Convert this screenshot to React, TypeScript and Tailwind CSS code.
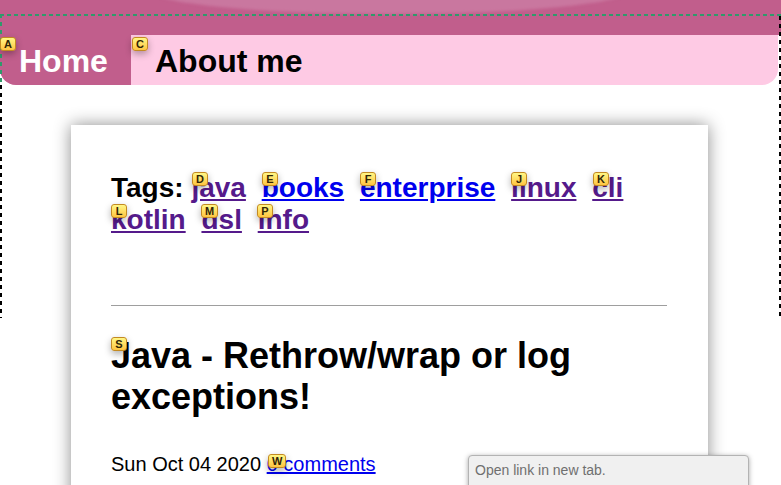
import React from "react";

const tags: { name: string; visited: boolean }[] = [
  { name: "java", visited: true },
  { name: "books", visited: false },
  { name: "enterprise", visited: false },
  { name: "linux", visited: true },
  { name: "cli", visited: true },
  { name: "kotlin", visited: true },
  { name: "dsl", visited: true },
  { name: "info", visited: true },
];

const hints: { l: string; x: number; y: number }[] = [
  { l: "A", x: 0, y: 37 },
  { l: "C", x: 132, y: 37 },
  { l: "D", x: 192, y: 172 },
  { l: "E", x: 262, y: 172 },
  { l: "F", x: 360, y: 172 },
  { l: "J", x: 511, y: 172 },
  { l: "K", x: 593, y: 172 },
  { l: "L", x: 111, y: 204 },
  { l: "M", x: 201, y: 204 },
  { l: "P", x: 257, y: 204 },
  { l: "S", x: 111, y: 337 },
  { l: "W", x: 268, y: 454 },
];

function Hint({ l, x, y }: { l: string; x: number; y: number }) {
  return (
    <div
      className="absolute z-30 min-w-[16px] px-[3px] border border-[#c38a22] rounded-[3px] bg-[image:linear-gradient(to_bottom,#fff785,#ffc542)] shadow-[0_3px_7px_rgba(0,0,0,0.3)] text-center text-[11px] leading-[12px] font-bold text-[#302505]"
      style={{ left: x, top: y }}
    >
      {l}
    </div>
  );
}

export default function App() {
  return (
    <div className="relative h-[485px] overflow-hidden bg-white font-['Liberation_Sans',Arial,sans-serif] text-black">
      <header>
        <div className="relative h-[35px] overflow-hidden bg-[#c15e8c]">
          <div className="absolute left-[150px] top-[-34px] h-[48px] w-[480px] rounded-[50%] bg-[#c9779f] blur-[1.5px]" />
        </div>
        <nav className="flex h-[50px] mr-[3px] overflow-hidden rounded-b-[16px] bg-[#fecae4]">
          <a className="flex w-[131px] items-center bg-[#c15e8c] pl-[19px] pt-[2px] text-[32px] font-bold text-white">
            Home
          </a>
          <a className="flex items-center pl-[24px] pt-[2px] text-[32px] font-bold text-black">
            About me
          </a>
        </nav>
      </header>

      <main className="pt-[40px]">
        <article className="ml-[71px] w-[637px] min-h-[500px] bg-white pl-[40px] pr-[41px] pt-[47px] shadow-[0_0_16px_rgba(0,0,0,0.45)]">
          <div className="text-[28px] leading-[32px] font-bold">
            Tags:{" "}
            {tags.map((t) => (
              <React.Fragment key={t.name}>
                <a
                  className={
                    "mr-2 underline " +
                    (t.visited ? "text-[#551a8b]" : "text-[#0000ee]")
                  }
                >
                  {t.name}
                </a>{" "}
              </React.Fragment>
            ))}
          </div>
          <hr className="mt-[69px] border-t border-[#9e9e9e]" />
          <h1 className="mt-[29px] text-[36px] leading-[41px] font-bold">
            Java - Rethrow/wrap or log exceptions!
          </h1>
          <p className="mt-[36px] text-[20px] leading-[23px]">
            Sun Oct 04 2020 <a className="text-[#0000ee] underline">0 comments</a>
          </p>
        </article>
      </main>

      {/* debug outlines */}
      <div className="absolute left-0 top-[14px] z-20 h-[2px] w-full bg-[image:repeating-linear-gradient(to_right,#2f9a6b_0_4px,transparent_4px_7px)]" />
      <div className="absolute left-0 top-[14px] z-20 h-[71px] w-[2px] bg-[image:repeating-linear-gradient(to_bottom,#2f9a6b_0_4px,transparent_4px_8px)]" />
      <div className="absolute left-0 top-[85px] z-20 h-[233px] w-[2px] bg-[image:repeating-linear-gradient(to_bottom,#000_0_4px,transparent_4px_8px)]" />
      <div className="absolute left-[779px] top-[16px] z-20 h-[302px] w-[2px] bg-[image:repeating-linear-gradient(to_bottom,#000_0_4px,transparent_4px_8px)]" />

      {hints.map((h) => (
        <Hint key={h.l} {...h} />
      ))}

      <div className="absolute left-[468px] top-[455px] z-40 h-[40px] w-[281px] rounded-[4px] border border-[#b3b3b3] bg-[#f0f0f0] px-[6px] pt-[6px] text-[14px] leading-[16px] text-[#6f6f6f] shadow-[0_1px_5px_rgba(0,0,0,0.35)]">
        Open link in new tab.
      </div>
    </div>
  );
}
